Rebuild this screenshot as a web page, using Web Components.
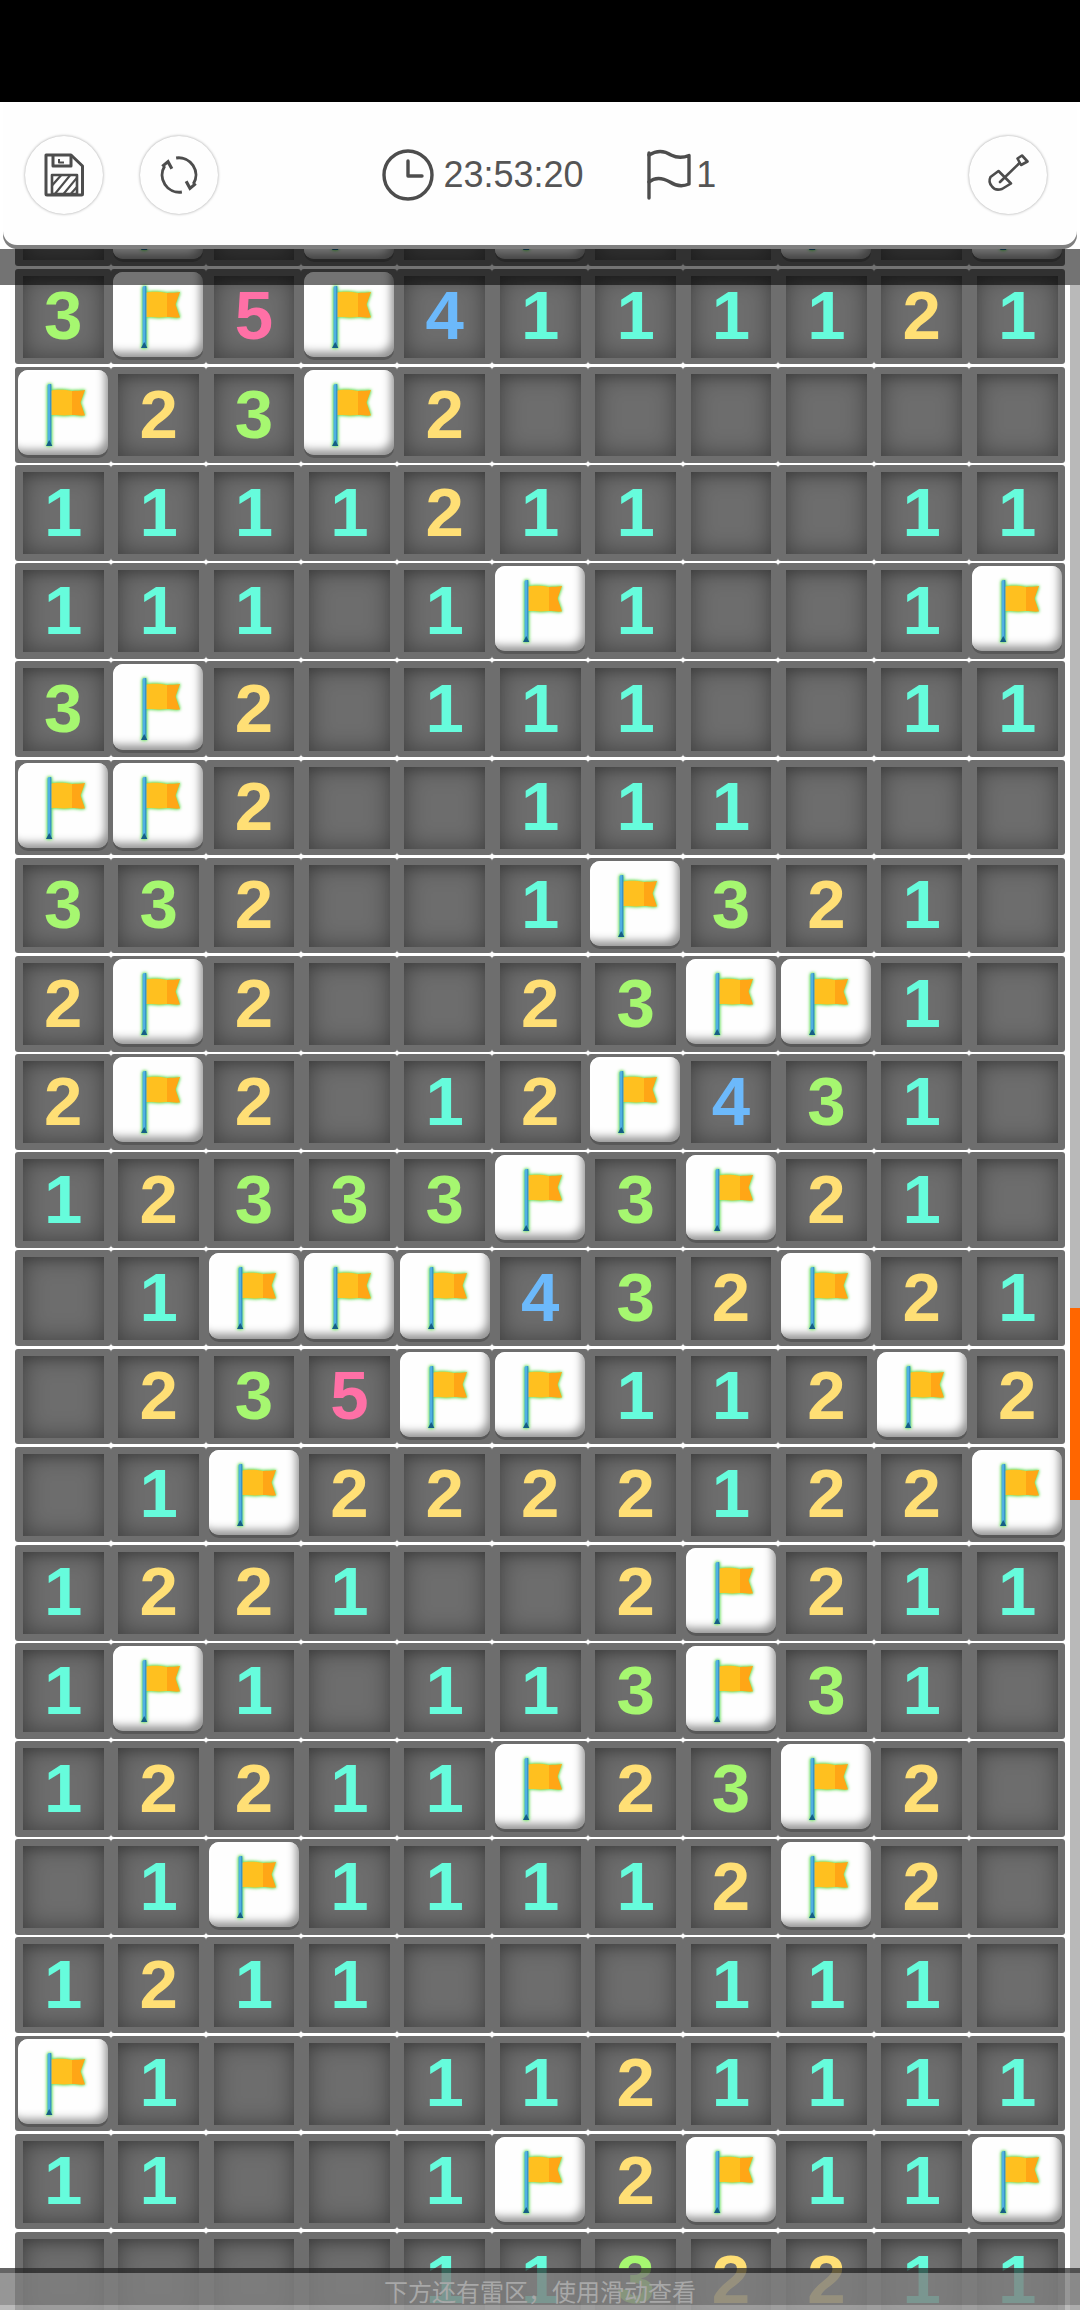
<!DOCTYPE html>
<html lang="zh">
<head>
<meta charset="utf-8">
<title>Minesweeper</title>
<style>
  html, body { margin: 0; padding: 0; background: #fff; }
  body { width: 1080px; height: 2310px; overflow: hidden; font-family: "Liberation Sans", sans-serif; }
</style>
</head>
<body>

<template id="round-button">
  <style>
    :host {
      display: flex;
      align-items: center;
      justify-content: center;
      flex: none;
      width: 78px;
      height: 78px;
      border-radius: 50%;
      background: #fefefe;
      box-shadow: 0 0 3px rgba(0,0,0,.38);
    }
  </style>
  <slot></slot>
</template>

<template id="stat-item">
  <style>
    :host {
      display: flex;
      align-items: center;
      flex: none;
      color: #555;
      font: 36px/1 "Liberation Sans", sans-serif;
    }
    ::slotted(svg) { display: block; flex: none; }
  </style>
  <slot name="icon"></slot>
  <slot></slot>
</template>

<template id="top-bar">
  <style>
    :host {
      display: flex;
      align-items: center;
      position: absolute;
      top: 102px;
      left: 3px;
      right: 3px;
      height: 143px;
      box-sizing: border-box;
      padding: 3px 30px 0 22px;
      background: #fefefe;
      border-radius: 0 0 14px 14px;
      box-shadow: 0 4px 0 #7f7f7f;
      z-index: 5;
    }
    .left { display: flex; gap: 37px; }
    .center { display: flex; align-items: center; margin-left: 164px; gap: 61.5px; }
    .right { margin-left: auto; }
  </style>
  <div class="left"><slot name="left"></slot></div>
  <div class="center"><slot name="stats"></slot></div>
  <div class="right"><slot name="right"></slot></div>
</template>

<template id="mine-cell">
  <style>
    :host {
      display: block;
      position: relative;
      box-sizing: border-box;
      padding: 7px 7px 6.5px 7.5px;
      background: #6e6e6e;
      border-radius: 3px;
      font: bold 69px/1 "Liberation Sans", sans-serif;
    }
    .pit {
      display: flex;
      align-items: center;
      justify-content: center;
      height: 100%;
      box-sizing: border-box;
      padding-bottom: 2px;
      background: #6d6d6d;
      box-shadow: inset 0 0 24px rgba(0,0,0,.42), inset 0 8px 10px -4px rgba(0,0,0,.14);
    }
    :host([flag]) { padding: 3px 2.7px 7.5px 2.7px; }
    .tile {
      display: block;
      height: 100%;
      background: #fefefe;
      border-radius: 10px;
      box-shadow: 0 3px 0 #585858, inset -6px -8px 9px -3px rgba(0,0,0,.42), inset 2px 2px 2px #fff;
    }
    .tile svg {
      display: block;
      filter: drop-shadow(0 0 1.5px #63dc58) drop-shadow(0 0 1.5px #8be87c);
    }
    :host([n="1"]) { color: #66fcdc; }
    :host([n="2"]) { color: #ffdf75; }
    :host([n="3"]) { color: #a6f770; }
    :host([n="4"]) { color: #6cb9fb; }
    :host([n="5"]) { color: #ff70a6; }
  </style>
  <div class="pit"><slot></slot></div>
</template>

<template id="mine-flag">
  <div class="tile">
    <svg width="90" height="85" viewBox="0 0 90 85">
      <path d="M32.5 21 C38 19 48 20 54 21 V45 C46 46 38 45 32.5 45 Z" fill="#ffc01f"/>
      <path d="M54 21 C58 20.5 62 21 67 20 L62.5 32.5 L67 45.5 C62 46 58 45 54 45 Z" fill="#ffa616"/>
      <rect x="29.5" y="14" width="3.8" height="61" rx="1.8" fill="#4fb0e2"/>
      <rect x="32" y="14" width="1.3" height="61" fill="#3a94c6"/>
      <path d="M28 76 L31.2 70 L34.4 76 Z" fill="#155e86"/>
    </svg>
  </div>
</template>

<template id="mine-board">
  <style>
    :host {
      display: grid;
      grid-template-columns: repeat(11, 95.4px);
      grid-auto-rows: 95.66px;
      row-gap: 2.5px;
      margin: 68.68px 0 0 15.3px;
    }
  </style>
</template>

<template id="top-shade">
  <style>
    :host {
      display: block;
      position: absolute;
      top: 249px;
      left: 0;
      right: 0;
      height: 36px;
      background: rgba(0,0,0,.55);
      z-index: 4;
    }
  </style>
</template>

<template id="hint-bar">
  <style>
    :host {
      display: block;
      position: absolute;
      left: 0;
      right: 0;
      bottom: 0;
      height: 42px;
      box-sizing: border-box;
      padding-top: 7px;
      border-top: 5px solid rgba(36,36,36,.7);
      border-bottom: 5px solid rgba(170,170,170,.8);
      background: rgba(127,127,127,.82);
      background-clip: padding-box;
      color: #a8a8a8;
      text-align: center;
      font: 24px/26px "Liberation Sans", "Noto Sans CJK SC", sans-serif;
      z-index: 4;
    }
  </style>
  <slot></slot>
</template>

<template id="scroll-rail">
  <style>
    :host {
      display: block;
      position: absolute;
      top: 285px;
      right: 0;
      bottom: 0;
      width: 10px;
      background: #b9b9b9;
      z-index: 3;
    }
    .thumb { margin-top: 1023px; height: 192px; background: #ff6600; }
  </style>
  <div class="thumb"></div>
</template>

<template id="game-screen">
  <style>
    :host {
      display: block;
      position: relative;
      width: 1080px;
      height: 2310px;
      overflow: hidden;
      background: #fff;
    }
    .status { height: 102px; background: #000; }
  </style>
  <div class="status"></div>
  <slot></slot>
</template>

<game-screen>
  <mine-board></mine-board>
  <scroll-rail></scroll-rail>
  <top-shade></top-shade>
  <top-bar>
    <round-button slot="left">
      <svg width="40" height="44" viewBox="0 0 40 44" fill="none" stroke="#4d4d4d" stroke-width="3" stroke-linejoin="round">
        <defs><clipPath id="hatch"><rect x="8" y="22" width="25" height="19"/></clipPath></defs>
        <path d="M2 2 H27 L38.5 13 V41 a1 1 0 0 1 -1 1 H3 a1 1 0 0 1 -1 -1 Z"/>
        <path d="M9 2 V13 H27 V2"/>
        <path d="M15 6 V9.5 H20" stroke-width="2"/>
        <rect x="8" y="22" width="25" height="19" stroke-width="2.6"/>
        <g clip-path="url(#hatch)" stroke-width="2.2">
          <path d="M4 37 L20 19 M10 42 L28 20 M17 44 L36 21 M24 44 L40 26"/>
        </g>
      </svg>
    </round-button>
    <round-button slot="left">
      <svg width="42" height="42" viewBox="0 0 44 44" fill="none" stroke="#4d4d4d" stroke-width="3.1">
        <path d="M19 4.2 A18 18 0 0 1 37 31.5"/>
        <path d="M25 39.8 A18 18 0 0 1 7 12.5"/>
        <path d="M29.5 28.5 L33.5 36 L39.5 31" stroke-width="3.3"/>
        <path d="M14.5 15.5 L10.5 8 L4.5 13" stroke-width="3.3"/>
      </svg>
    </round-button>
    <stat-item slot="stats">
      <svg slot="icon" width="52" height="52" viewBox="0 0 52 52" fill="none" stroke="#4d4d4d" stroke-width="3.4" stroke-linecap="round" stroke-linejoin="round" style="margin-right:9.5px">
        <circle cx="26" cy="26" r="24"/>
        <path d="M26 12 V27 H40"/>
      </svg>
      23:53:20
    </stat-item>
    <stat-item slot="stats">
      <svg slot="icon" width="46" height="52" viewBox="0 0 46 52" fill="none" stroke="#4d4d4d" stroke-width="3.4" stroke-linecap="round" stroke-linejoin="round" style="margin-right:5px">
        <path d="M4 4 V49"/>
        <path d="M4 6 C12 1 20 2 26 6 C32 9 38 9 44 6.5 V35 C37 38 31 37 25 33 C18 29 10 28 4 33"/>
      </svg>
      1
    </stat-item>
    <round-button slot="right">
      <svg width="65" height="60" viewBox="0 0 65 60" fill="none" stroke="#4d4d4d" stroke-width="2.6" stroke-linejoin="round" stroke-linecap="round">
        <path d="M22.5 26 L35 38.5 L26 44 Q19 46 16 41.5 Q12 37 14.5 32 Z"/>
        <path d="M24 37 L43.5 18"/>
        <path d="M41.5 13.5 L46 10.5 L51.5 16.5 L45 20 Z"/>
      </svg>
    </round-button>
  </top-bar>
  <hint-bar>下方还有雷区&#xFF0C;使用滑动查看</hint-bar>
</game-screen>

<script>
  // one string per board row: F = flag, . = open empty, digit = count
  var ROWS = [
    '.F.F.F..F.F',
    '3F5F4111121',
    'F23F2......',
    '1111211..11',
    '111.1F1..1F',
    '3F2.111..11',
    'FF2..111...',
    '332..1F321.',
    '2F2..23FF1.',
    '2F2.12F431.',
    '12333F3F21.',
    '.1FFF432F21',
    '.235FF112F2',
    '.1F2222122F',
    '1221..2F211',
    '1F1.113F31.',
    '12211F23F2.',
    '.1F11112F2.',
    '1211...111.',
    'F1..1121111',
    '11..1F2F11F',
    '....1132211'
  ];

  function stamp(el, id) {
    var shadow = el.attachShadow({mode: 'open'});
    shadow.appendChild(document.getElementById(id).content.cloneNode(true));
    return shadow;
  }

  class GameScreen extends HTMLElement {
    constructor() { super(); stamp(this, 'game-screen'); }
  }
  class RoundButton extends HTMLElement {
    constructor() { super(); stamp(this, 'round-button'); }
  }
  class StatItem extends HTMLElement {
    constructor() { super(); stamp(this, 'stat-item'); }
  }
  class TopBar extends HTMLElement {
    constructor() { super(); stamp(this, 'top-bar'); }
  }
  class TopShade extends HTMLElement {
    constructor() { super(); stamp(this, 'top-shade'); }
  }
  class HintBar extends HTMLElement {
    constructor() { super(); stamp(this, 'hint-bar'); }
  }
  class ScrollRail extends HTMLElement {
    constructor() { super(); stamp(this, 'scroll-rail'); }
  }

  class MineCell extends HTMLElement {
    constructor() {
      super();
      this.shadow = stamp(this, 'mine-cell');
    }
    connectedCallback() {
      if (this.hasAttribute('flag')) {
        var pit = this.shadow.querySelector('.pit');
        pit.replaceWith(document.getElementById('mine-flag').content.cloneNode(true));
      }
    }
  }

  class MineBoard extends HTMLElement {
    constructor() {
      super();
      var shadow = stamp(this, 'mine-board');
      ROWS.forEach(function (row) {
        row.split('').forEach(function (c) {
          var cell = document.createElement('mine-cell');
          if (c === 'F') {
            cell.setAttribute('flag', '');
          } else if (c !== '.') {
            cell.setAttribute('n', c);
            cell.textContent = c;
          }
          shadow.appendChild(cell);
        });
      });
    }
  }

  customElements.define('mine-cell', MineCell);
  customElements.define('mine-board', MineBoard);
  customElements.define('game-screen', GameScreen);
  customElements.define('round-button', RoundButton);
  customElements.define('stat-item', StatItem);
  customElements.define('top-bar', TopBar);
  customElements.define('top-shade', TopShade);
  customElements.define('hint-bar', HintBar);
  customElements.define('scroll-rail', ScrollRail);
</script>
</body>
</html>
